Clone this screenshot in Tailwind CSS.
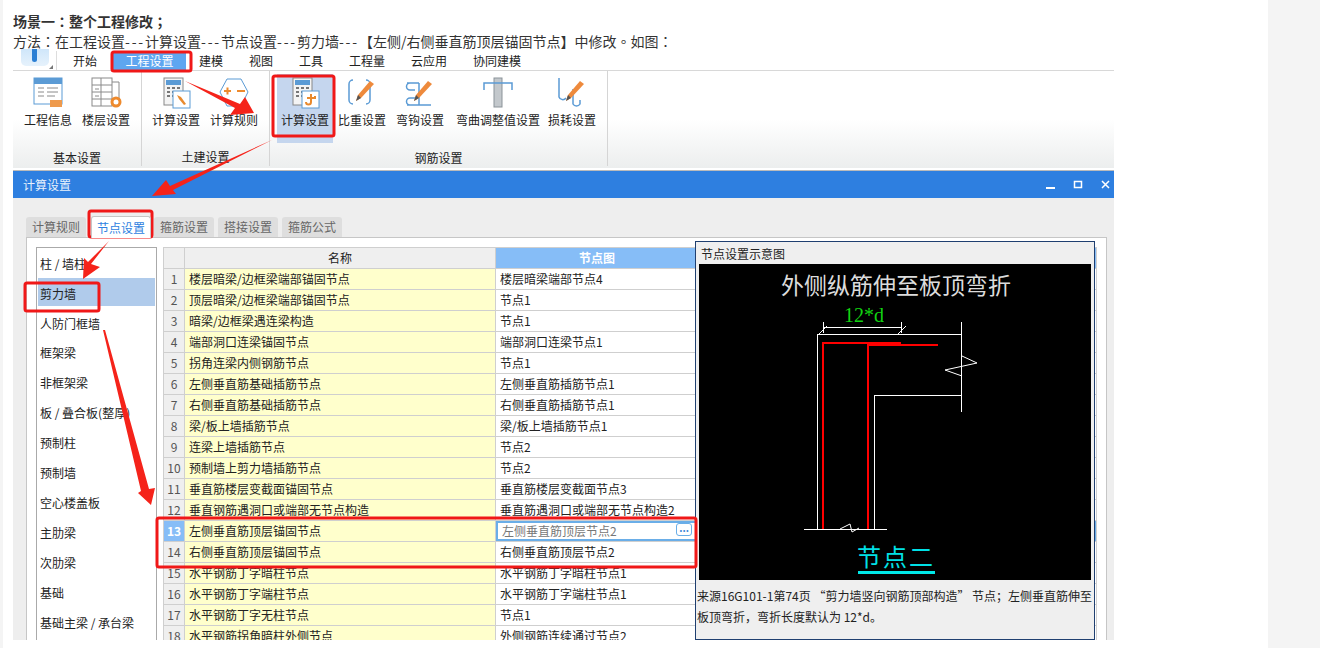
<!DOCTYPE html>
<html lang="zh-CN">
<head>
    <meta charset="UTF-8">
    <title>计算设置</title>
    <script src="https://cdn.jsdelivr.net/npm/@tailwindcss/browser@4"></script>
</head>
<body class="relative w-[1320px] h-[648px] overflow-hidden bg-[#f4f4f4] font-['Noto_Sans_CJK_SC','Noto_Sans',sans-serif] text-[12px] text-[#222]">
    <div class="ml-[3px] w-[1265px] h-[648px] bg-white pl-[10px] flex flex-col">
        <!-- article text, the full-width punctuation is centred in the original -->
        <h2 class="h-[20px] mt-[11px] text-[14px] leading-[20px] font-bold text-[#333]">场景一<span lang="zh-TW" class="font-['Noto_Sans_CJK_TC']">：</span>整个工程修改<span lang="zh-TW" class="font-['Noto_Sans_CJK_TC']">；</span></h2>
        <p class="h-[20px] text-[14px] leading-[20px] text-[#333]">方法<span lang="zh-TW" class="font-['Noto_Sans_CJK_TC']">：</span>在工程设置<span class="tracking-[1.8px]">---</span>计算设置<span class="tracking-[1.8px]">---</span>节点设置<span class="tracking-[1.8px]">---</span>剪力墙<span class="tracking-[1.8px]">---</span>【左侧/右侧垂直筋顶层锚固节点】中修改<span lang="zh-TW" class="font-['Noto_Sans_CJK_TC']">。</span>如图<span lang="zh-TW" class="font-['Noto_Sans_CJK_TC']">：</span></p>

        <!-- ribbon tabs -->
        <div class="w-[1101px] h-[20px] flex items-end border-b border-[#d8d8d8] relative">
            <div class="w-[44px] h-[19px] border-r border-[#ddd] flex items-start justify-center relative">
                <div class="w-[28px] h-[17px] -mt-[2px] rounded-b-[5px] bg-gradient-to-b from-[#cfe6fa] to-[#e6f2fc] flex justify-center">
                    <div class="w-[5px] h-[13px] rounded-b-full bg-[#2b7fd4]"></div>
                </div>
                <div class="absolute right-[3px] bottom-[1px] w-0 h-0 border-l-[4px] border-l-transparent border-b-[4px] border-b-[#777]"></div>
            </div>
            <div class="w-[56px] text-center leading-[19px]">开始</div>
            <div class="w-[73px] h-[18px] bg-[#5ea6f0] text-white text-center leading-[18px]">工程设置</div>
            <div class="w-[50px] text-center leading-[19px]">建模</div>
            <div class="w-[50px] text-center leading-[19px]">视图</div>
            <div class="w-[50px] text-center leading-[19px]">工具</div>
            <div class="w-[62px] text-center leading-[19px]">工程量</div>
            <div class="w-[62px] text-center leading-[19px]">云应用</div>
            <div class="w-[74px] text-center leading-[19px]">协同建模</div>
        </div>

        <!-- ribbon body -->
        <div class="w-[1101px] h-[97px] flex bg-gradient-to-b from-white via-white to-[#eceeee]">
            <div class="w-[129px] border-r border-[#d5d5d5] flex flex-col mb-[2px]">
                <div class="flex shrink-0 pl-[6px] h-[73px]">
                    <div class="w-[58px] flex flex-col items-center pt-[6px]">
                        <svg width="32" height="32" viewBox="0 0 32 32"><rect x="2" y="1" width="28" height="26" fill="#fff" stroke="#5b9bd5"/><rect x="2" y="1" width="28" height="6" fill="#5b9bd5"/><path d="M6 11h6M6 15h6M6 19h6M15 11h11M15 15h11M15 19h8" stroke="#8a8a8a"/><path d="M18 23h12v7H18z" fill="#ee9a4d"/></svg>
                        <span class="mt-[3px] leading-[16px]">工程信息</span>
                    </div>
                    <div class="w-[58px] flex flex-col items-center pt-[6px]">
                        <svg width="32" height="32" viewBox="0 0 32 32"><rect x="2" y="1" width="20" height="28" fill="#fff" stroke="#8a8a8a"/><path d="M2 8h20M2 15h20M2 22h20M11 1v28M22 5h7v16" fill="none" stroke="#8a8a8a"/><path d="M5 12h4M5 19h4" stroke="#8a8a8a"/><circle cx="26" cy="25" r="4" fill="none" stroke="#ee8a2d" stroke-width="3"/></svg>
                        <span class="mt-[3px] leading-[16px]">楼层设置</span>
                    </div>
                </div>
                <div class="shrink-0 text-center leading-[20px] mt-[4px]">基本设置</div>
            </div>
            <div class="w-[128px] border-r border-[#d5d5d5] flex flex-col mb-[2px]">
                <div class="flex shrink-0 pl-[5px] h-[73px]">
                    <div class="w-[58px] flex flex-col items-center pt-[6px]">
                        <svg width="32" height="32" viewBox="0 0 32 32"><rect x="4" y="1" width="19" height="27" fill="#f4f4f4" stroke="#888"/><rect x="6" y="3" width="15" height="5" fill="#5b9bd5"/><path d="M7 11h3M12 11h3M17 11h3M7 15h3M12 15h3M7 19h3M12 19h3" stroke="#777" stroke-width="2"/><rect x="13" y="14" width="17" height="17" fill="#fff" stroke="#5b9bd5"/><path d="M17 18l4 2 5 7-2 1-5-6z" fill="#e98a2d"/></svg>
                        <span class="mt-[3px] leading-[16px]">计算设置</span>
                    </div>
                    <div class="w-[58px] flex flex-col items-center pt-[6px]">
                        <svg width="32" height="32" viewBox="0 0 32 32"><path d="M9 2h14l7 13-7 14H9L2 15z" fill="#fff" stroke="#5b9bd5"/><path d="M6 14h7M9.500 10.500v7M19 14h8" stroke="#ee8a2d" stroke-width="2"/></svg>
                        <span class="mt-[3px] leading-[16px]">计算规则</span>
                    </div>
                </div>
                <div class="shrink-0 text-center leading-[20px] mt-[3px]">土建设置</div>
            </div>
            <div class="w-[338px] border-r border-[#d5d5d5] flex flex-col mb-[2px]">
                <div class="flex shrink-0 pl-[7px] h-[73px]">
                    <div class="w-[56px] h-[69px] mt-[3px] bg-[#c5d6ee] flex flex-col items-center pt-[3px]">
                        <svg width="32" height="32" viewBox="0 0 32 32"><rect x="4" y="1" width="19" height="27" fill="#f4f4f4" stroke="#888"/><rect x="6" y="3" width="15" height="5" fill="#5b9bd5"/><path d="M7 11h3M12 11h3M17 11h3M7 15h3M12 15h3M7 19h3M12 19h3" stroke="#777" stroke-width="2"/><rect x="13" y="14" width="17" height="17" fill="#fff" stroke="#5b9bd5"/><path d="M22 17v8a2 2 0 0 1-5 0M18 21h8v-2" fill="none" stroke="#e98a2d" stroke-width="2"/></svg>
                        <span class="mt-[3px] leading-[16px]">计算设置</span>
                    </div>
                    <div class="w-[58px] flex flex-col items-center pt-[6px]">
                        <svg width="32" height="32" viewBox="0 0 32 32"><path d="M7 3a4 4 0 0 0-4 4v16a4 4 0 0 0 4 4M20 3a4 4 0 0 1 4 4v16a4 4 0 0 1-4 4" fill="none" stroke="#5b9bd5" stroke-width="1.500"/><path d="M10 24l2-6L24 4l4 3-13 14z" fill="#ee8a3c"/><path d="M10 24l2-6 3 3z" fill="#555"/></svg>
                        <span class="mt-[3px] leading-[16px]">比重设置</span>
                    </div>
                    <div class="w-[58px] flex flex-col items-center pt-[6px]">
                        <svg width="32" height="32" viewBox="0 0 32 32"><path d="M3 6h12M6 6a3 3 0 0 0 0 7h5M3 28h24M6 28a3 3 0 0 1 0-7h6M15 6v22" fill="none" stroke="#5b9bd5" stroke-width="1.500"/><path d="M10 24l2-6L24 4l4 3-13 14z" fill="#ee8a3c"/><path d="M10 24l2-6 3 3z" fill="#555"/></svg>
                        <span class="mt-[3px] leading-[16px]">弯钩设置</span>
                    </div>
                    <div class="w-[98px] flex flex-col items-center pt-[6px]">
                        <svg width="32" height="32" viewBox="0 0 32 32"><rect x="12" y="1" width="8" height="29" fill="#c3c8cc" stroke="#8b9399"/><path d="M2 13V6h28v7" fill="none" stroke="#5b9bd5" stroke-width="1.500"/></svg>
                        <span class="mt-[3px] leading-[16px]">弯曲调整值设置</span>
                    </div>
                    <div class="w-[50px] flex flex-col items-center pt-[6px]">
                        <svg width="32" height="32" viewBox="0 0 32 32" class="shrink-0"><path d="M3 1v19a4 4 0 0 0 7 1M24 23v4a4 4 0 0 1-7 0V12" fill="none" stroke="#5b9bd5" stroke-width="1.500"/><path d="M10 24l2-6L24 4l4 3-13 14z" fill="#ee8a3c"/><path d="M10 24l2-6 3 3z" fill="#555"/></svg>
                        <span class="mt-[3px] leading-[16px] whitespace-nowrap">损耗设置</span>
                    </div>
                </div>
                <div class="shrink-0 text-center leading-[20px] mt-[4px]">钢筋设置</div>
            </div>
        </div>

        <!-- dialog -->
        <div class="w-[1101px] h-[470px] mt-[2px] border-t border-[#bbb] flex flex-col bg-[#eeeeee]">
            <div class="h-[27px] shrink-0 bg-[#2e7fe0] text-white flex items-center pl-[10px] pr-[1px] leading-[27px]">
                <span class="text-[#e8f1fc]">计算设置</span>
                <svg class="ml-auto" width="70" height="14" viewBox="0 0 70 14"><path d="M3 10h9" stroke="#fff" stroke-width="2"/><rect x="31.500" y="3.500" width="7" height="6" fill="none" stroke="#fff" stroke-width="1.500"/><path d="M59 3l7 7M66 3l-7 7" stroke="#fff" stroke-width="1.500"/></svg>
            </div>
            <div class="flex-1 min-h-0 px-[13px] pt-[17px] pb-0 pr-[7px] flex flex-col">
                <div class="h-[22px] flex items-end gap-[4px] text-[#666] relative z-10">
                    <div class="w-[60px] h-[20px] bg-[#dedede] rounded-t-[3px] text-center leading-[20px]">计算规则</div>
                    <div class="w-[60px] h-[22px] ml-[1px] -mr-[1px] -mb-[1px] bg-white border border-b-0 border-[#c6c6c6] rounded-t-[3px] text-center leading-[22px] text-[#2e7fe0]">节点设置</div>
                    <div class="w-[60px] h-[20px] bg-[#dedede] rounded-t-[3px] text-center leading-[20px]">箍筋设置</div>
                    <div class="w-[60px] h-[20px] bg-[#dedede] rounded-t-[3px] text-center leading-[20px]">搭接设置</div>
                    <div class="w-[60px] h-[20px] bg-[#dedede] rounded-t-[3px] text-center leading-[20px]">箍筋公式</div>
                </div>
                <div class="flex-1 min-h-0 bg-white border border-b-0 border-[#c6c6c6] pl-[9px] pt-[9px] flex gap-[6px] overflow-hidden">
                    <!-- category list -->
                    <div class="w-[121px] shrink-0 border border-b-0 border-[#aaa] p-px">
                        <div class="h-[29px] pl-[2px] leading-[29px]">柱 / 墙柱</div>
                        <div class="h-[28px] pl-[2px] leading-[32px] bg-[#b0cbeb]">剪力墙</div>
                        <div class="h-[30px] pl-[2px] leading-[35px]">人防门框墙</div>
                        <div class="h-[30px] pl-[2px] leading-[34px]">框架梁</div>
                        <div class="h-[30px] pl-[2px] leading-[34px]">非框架梁</div>
                        <div class="h-[30px] pl-[2px] leading-[34px]">板 / 叠合板(整厚)</div>
                        <div class="h-[30px] pl-[2px] leading-[34px]">预制柱</div>
                        <div class="h-[30px] pl-[2px] leading-[34px]">预制墙</div>
                        <div class="h-[30px] pl-[2px] leading-[34px]">空心楼盖板</div>
                        <div class="h-[30px] pl-[2px] leading-[34px]">主肋梁</div>
                        <div class="h-[30px] pl-[2px] leading-[34px]">次肋梁</div>
                        <div class="h-[30px] pl-[2px] leading-[34px]">基础</div>
                        <div class="h-[30px] pl-[2px] leading-[34px]">基础主梁 / 承台梁</div>
                    </div>
                    <!-- node table -->
                    <table class="w-[934px] h-fit border-collapse table-fixed [&_td]:h-[21px] [&_td]:p-0 [&_td]:pl-[4px] [&_td]:leading-[20px] [&_td]:border [&_td]:border-[#cfcfcf] [&_td:first-child]:pl-0 [&_td:first-child]:text-center [&_td:first-child]:bg-[#efefef] [&_td:first-child]:text-[#555] [&_td:nth-child(2)]:bg-[#ffffcc]">
                        <colgroup><col class="w-[21px]"><col class="w-[311px]"><col></colgroup>
                        <thead>
                            <tr class="h-[20px] leading-[20px] [&_th]:border [&_th]:border-[#cfcfcf] [&_th]:font-normal">
                                <th class="bg-[#efefef]"></th>
                                <th class="bg-[#efefef]">名称</th>
                                <th class="!bg-[#86bdf7] text-white text-left pl-[83px] !font-bold">节点图</th>
                            </tr>
                        </thead>
                        <tbody>
                            <tr><td>1</td><td>楼层暗梁/边框梁端部锚固节点</td><td>楼层暗梁端部节点4</td></tr>
                            <tr><td>2</td><td>顶层暗梁/边框梁端部锚固节点</td><td>节点1</td></tr>
                            <tr><td>3</td><td>暗梁/边框梁遇连梁构造</td><td>节点1</td></tr>
                            <tr><td>4</td><td>端部洞口连梁锚固节点</td><td>端部洞口连梁节点1</td></tr>
                            <tr><td>5</td><td>拐角连梁内侧钢筋节点</td><td>节点1</td></tr>
                            <tr><td>6</td><td>左侧垂直筋基础插筋节点</td><td>左侧垂直筋插筋节点1</td></tr>
                            <tr><td>7</td><td>右侧垂直筋基础插筋节点</td><td>右侧垂直筋插筋节点1</td></tr>
                            <tr><td>8</td><td>梁/板上墙插筋节点</td><td>梁/板上墙插筋节点1</td></tr>
                            <tr><td>9</td><td>连梁上墙插筋节点</td><td>节点2</td></tr>
                            <tr><td>10</td><td>预制墙上剪力墙插筋节点</td><td>节点2</td></tr>
                            <tr><td>11</td><td>垂直筋楼层变截面锚固节点</td><td>垂直筋楼层变截面节点3</td></tr>
                            <tr><td>12</td><td>垂直钢筋遇洞口或端部无节点构造</td><td>垂直筋遇洞口或端部无节点构造2</td></tr>
                            <tr><td class="!bg-[#86bdf7] !text-white font-bold">13</td><td>左侧垂直筋顶层锚固节点</td><td class="text-[#777] !pl-[6px] shadow-[inset_0_0_0_2px_#6aaee8]">左侧垂直筋顶层节点2</td></tr>
                            <tr><td>14</td><td>右侧垂直筋顶层锚固节点</td><td>右侧垂直筋顶层节点2</td></tr>
                            <tr><td>15</td><td>水平钢筋丁字暗柱节点</td><td>水平钢筋丁字暗柱节点1</td></tr>
                            <tr><td>16</td><td>水平钢筋丁字端柱节点</td><td>水平钢筋丁字端柱节点1</td></tr>
                            <tr><td>17</td><td>水平钢筋丁字无柱节点</td><td>节点1</td></tr>
                            <tr><td>18</td><td>水平钢筋拐角暗柱外侧节点</td><td>外侧钢筋连续通过节点2</td></tr>
                        </tbody>
                    </table>
                </div>
            </div>
        </div>
    </div>

    <!-- "..." button of the edited cell -->
    <div class="absolute left-[676px] top-[523px] w-[16px] h-[13px] rounded-[3px] border border-[#6aaee8] bg-white text-[#3d87d8] text-[10px] font-bold leading-[8px] text-center">...</div>

    <!-- floating preview window -->
    <div class="absolute left-[695px] top-[241px] w-[400px] h-[399px] bg-[#efefef] border border-[#1f3f70] px-[3px] flex flex-col">
        <div class="h-[22px] pl-[2px] leading-[24px] text-[#222]">节点设置示意图</div>
        <svg class="shrink-0" width="392" height="316" viewBox="699 264 392 316">
            <rect x="699" y="264" width="392" height="316" fill="#000"/>
            <text x="896" y="294" text-anchor="middle" fill="#dcdcdc" font-size="23" font-family="Noto Sans CJK SC">外侧纵筋伸至板顶弯折</text>
            <text x="864" y="322" text-anchor="middle" fill="#12d212" font-size="20" font-family="Liberation Serif">12*d</text>
            <g stroke="#fff" fill="none" shape-rendering="crispEdges">
                <path d="M823.500 322v11M901.500 322v11M823 327.500h79M817.500 334.500H962M817.500 334v195M874.500 396v133M874 395.500h88M961.500 322v90M804 529.500h83"/>
            </g>
            <g stroke="#fff" fill="none">
                <path d="M819 334l8-8M898 334l8-8M962 356l15 7-32 7 17 6M840 529l10-5 2 8 7-4"/>
            </g>
            <g fill="#f00">
                <rect x="822" y="342" width="79" height="2"/>
                <rect x="867" y="344" width="71" height="2"/>
                <rect x="867" y="342" width="34" height="4"/>
                <rect x="822" y="342" width="2" height="187"/>
                <rect x="867" y="344" width="2" height="185"/>
            </g>
            <text x="896" y="566" text-anchor="middle" fill="#00e0e6" font-size="24" letter-spacing="2" font-family="Noto Sans CJK SC">节点二</text>
            <rect x="858" y="571" width="77" height="3" fill="#00e8e8"/>
        </svg>
        <p class="mt-[5px] -mx-[2px] leading-[21px] whitespace-nowrap text-[#222] text-[12px]">来源16G101-1第74页 “剪力墙竖向钢筋顶部构造” 节点；左侧垂直筋伸至<br>板顶弯折，弯折长度默认为 12*d。</p>
    </div>

    <!-- red annotations drawn over the screenshot -->
    <svg class="absolute left-0 top-0 pointer-events-none" width="1320" height="648" viewBox="0 0 1320 648">
        <g fill="none" stroke="#f01818" stroke-width="3">
            <rect x="112" y="52" width="79" height="19" rx="2"/>
            <rect x="273" y="76" width="61" height="60" rx="2"/>
            <rect x="89" y="211" width="63" height="26" rx="2"/>
            <rect x="25" y="283" width="74" height="28" rx="2"/>
            <rect x="157" y="518" width="539" height="49" rx="2"/>
        </g>
        <g fill="#f5231a">
            <path d="M185 81L240 104 245 97 254 113 230 115 235 108Z"/>
            <path d="M272 140L170 186 166 180 152 196 176 194 173 190Z"/>
            <path d="M109 241L91 264 100 267 83 279 84 258 88 262Z"/>
            <path d="M103 330L105 330 149 489 155 488 151 505 138 493 141 491Z"/>
        </g>
    </svg>
</body>
</html>
